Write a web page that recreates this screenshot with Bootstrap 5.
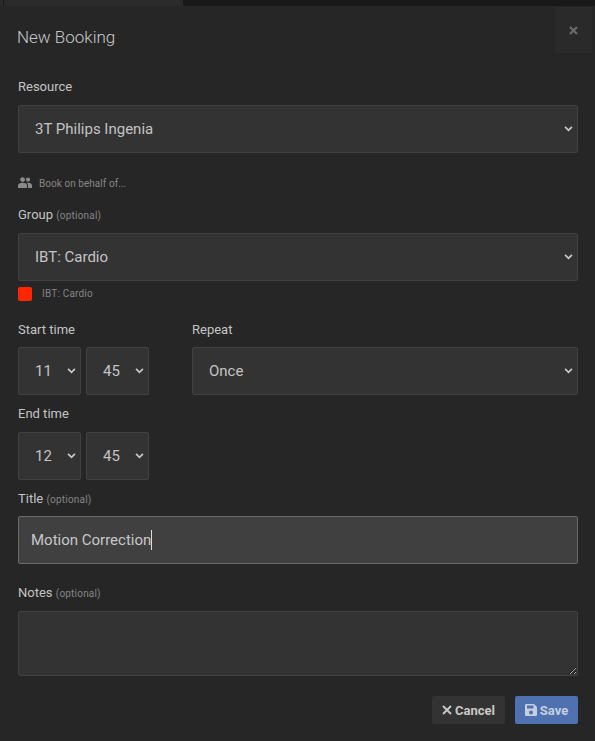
<!DOCTYPE html>
<html lang="en">
<head>
<meta charset="utf-8">
<title>New Booking</title>
<link rel="stylesheet" href="https://cdn.jsdelivr.net/npm/bootstrap@5.3.0/dist/css/bootstrap.min.css">
<style>
html,body{height:741px;overflow:hidden;background:#262626;font-family:Roboto,"Liberation Sans",sans-serif;color:#c8c8c8}
.top-strip{height:6px;background:#191919}
.top-tab{width:183px;background:#2a2a2a}
.top-tab-mark{width:1px;margin-left:3px;background:#191919}
.dlg{padding:0 17px 0 18px;position:relative}
.dlg-title{font-size:17px;font-weight:300;line-height:20px;color:#c9c9c9;margin:0 0 0 -1px;padding-top:21px;height:55px}
.dlg-close{position:absolute;top:1px;right:3px;width:37px;height:46px;border:0;background:#2a2a2a;color:#666;display:flex;align-items:center;justify-content:center;padding:0}
.lbl{display:block;font-size:13px;line-height:16px;color:#c4c4c4;margin:0;font-weight:400}
.lbl-res{margin-top:18px;margin-bottom:10px}
.lbl-grp{margin-bottom:9px}
.lbl-time{margin-bottom:9px}
.lbl-end{margin-top:11px;margin-bottom:10px}
.lbl-title{margin-top:11px;margin-bottom:8px}
.lbl-notes{margin-top:21px;margin-bottom:9px}
.opt{font-size:10px;color:#858585;letter-spacing:.2px}
.fld{background-color:#333;border:1px solid #414141;border-radius:2px;color:#c4c4c4;font-size:15px;font-family:Roboto,"Liberation Sans",sans-serif;height:48px;box-shadow:none}
select.fld{background-image:url("data:image/svg+xml,%3Csvg xmlns='http://www.w3.org/2000/svg' viewBox='0 0 10 7'%3E%3Cpath fill='none' stroke='%23c8c8c8' stroke-width='2' d='M1 1l4 4 4-4'/%3E%3C/svg%3E");background-size:9px 6px;background-position:right 4px center;padding:0 14px 0 16px}
.fld-time{width:63px;padding-left:16px!important;padding-right:0!important}
.time-pair{gap:5px}
.fld-active.form-control{background:#404040;border-color:#6a6a6a;padding:0 12px;color:#c8c8c8}
.fld-note.form-control{height:65px;min-height:65px;background:#333;border-color:#414141;color:#c4c4c4}
.caret-mark{position:absolute;left:133px;top:14px;width:1px;height:20px;background:#ddd}
.sub-row{font-size:10px;color:#858585;letter-spacing:.2px;line-height:14px}
.swatch{width:14px;height:14px;background:#ff2600;border-radius:2px;margin-right:10px}
.swatch-row{margin-top:6px}
.behalf{padding-top:24px;height:54px;align-items:flex-start;letter-spacing:.05px}
.behalf svg{margin-right:7px;margin-top:0}
.times-row{margin-top:21px}
.acts{gap:10px;margin-top:20px}
.act{font-size:13px;font-weight:700;height:28px;border-radius:2px;border:0;padding:0;display:inline-flex;align-items:center;justify-content:center;line-height:1}
.act svg{margin-right:3px}
.act-cancel{width:73px;background:#333;color:#c8c8c8}
.act-save{width:63px;background:#4f71b0;color:#c6cfe0}
.col-times{width:174px}
</style>
</head>
<body>
<div class="top-strip d-flex">
  <div class="top-tab d-flex"><span class="top-tab-mark"></span></div>
</div>
<div class="dlg">
  <h5 class="dlg-title">New Booking</h5>
  <button type="button" class="dlg-close" aria-label="Close">
    <svg width="9" height="9" viewBox="0 0 9 9"><path d="M1 1l7 7M8 1L1 8" stroke="#6c6c6c" stroke-width="2.2" fill="none"/></svg>
  </button>

  <label class="lbl lbl-res" for="res">Resource</label>
  <select id="res" class="form-select fld"><option>3T Philips Ingenia</option></select>

  <div class="d-flex sub-row behalf">
    <svg width="14" height="11" viewBox="0 0 14 11"><g fill="#8a8a8a"><circle cx="4.6" cy="2.6" r="2.4"/><circle cx="10" cy="2.6" r="2.1"/><path d="M0 11V8.6C0 6.8 2 5.8 4.6 5.8S9 6.8 9 8.6V11zM10 11V8.4c0-1-.5-1.9-1.3-2.500.4-.1.9-.2 1.400-.2 2 0 3.900 1 3.900 2.700V11z"/></g></svg>
    <span>Book on behalf of...</span>
  </div>

  <label class="lbl lbl-grp" for="grp">Group <span class="opt">(optional)</span></label>
  <select id="grp" class="form-select fld"><option>IBT: Cardio</option></select>
  <div class="d-flex align-items-center sub-row swatch-row">
    <span class="swatch"></span><span>IBT: Cardio</span>
  </div>

  <div class="d-flex times-row">
    <div class="col-times">
      <label class="lbl lbl-time">Start time</label>
      <div class="d-flex time-pair">
        <select class="form-select fld fld-time" aria-label="Start hour"><option>11</option></select>
        <select class="form-select fld fld-time" aria-label="Start minute"><option>45</option></select>
      </div>
      <label class="lbl lbl-end">End time</label>
      <div class="d-flex time-pair">
        <select class="form-select fld fld-time" aria-label="End hour"><option>12</option></select>
        <select class="form-select fld fld-time" aria-label="End minute"><option>45</option></select>
      </div>
    </div>
    <div class="flex-grow-1">
      <label class="lbl lbl-time" for="rep">Repeat</label>
      <select id="rep" class="form-select fld"><option>Once</option></select>
    </div>
  </div>

  <label class="lbl lbl-title" for="ttl">Title <span class="opt">(optional)</span></label>
  <div class="position-relative">
    <input id="ttl" class="form-control fld fld-active" type="text" value="Motion Correction">
    <span class="caret-mark"></span>
  </div>

  <label class="lbl lbl-notes" for="nts">Notes <span class="opt">(optional)</span></label>
  <textarea id="nts" class="form-control fld fld-note"></textarea>

  <div class="d-flex justify-content-end acts">
    <button type="button" class="act act-cancel">
      <svg width="10" height="10" viewBox="0 0 10 10"><path d="M1 1l8 8M9 1L1 9" stroke="#c8c8c8" stroke-width="1.900" fill="none"/></svg>Cancel
    </button>
    <button type="button" class="act act-save">
      <svg width="12" height="12" viewBox="0 0 12 12"><path fill="#c6cfe0" fill-rule="evenodd" d="M1.300 0H9l3 3v7.700c0 .7-.6 1.300-1.300 1.300H1.300C.6 12 0 11.400 0 10.700V1.300C0 .6.600 0 1.300 0zM2 1.500v3h6.500v-3zM6 6.500a2 2 0 100 4 2 2 0 000-4z"/></svg>Save
    </button>
  </div>
</div>
<script src="https://cdn.jsdelivr.net/npm/bootstrap@5.3.0/dist/js/bootstrap.bundle.min.js"></script>
</body>
</html>
